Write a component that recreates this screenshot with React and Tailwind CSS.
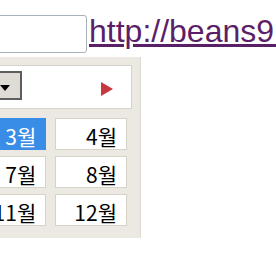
import React from "react";

const months = ["1월","2월","3월","4월","5월","6월","7월","8월","9월","10월","11월","12월"];

export default function App() {
  return (
    <div className="w-[276px] h-[260px] overflow-hidden bg-white font-['Liberation_Sans',sans-serif]">
      <div className="flex items-start pt-[15px]">
        <div className="w-[100px] -ml-[13px] h-[38px] shrink-0 border border-[#a9b1bb] rounded-[3px] bg-white" />
        <a href="#" className="ml-[2px] text-[32px] leading-[32px] text-[#5b1f68] underline whitespace-nowrap">
          http://beans9.tistory.com
        </a>
      </div>
      <div className="mt-[4px] -ml-[200px] w-[341px] h-[181px] bg-[#ebe9e1] border-r border-[#dcdad2] pt-[8px]">
        <div className="mx-[8px] h-[44px] border border-[#d6d3c9] bg-white flex items-start">
          <div className="ml-[143px] mt-[5px] w-[70px] h-[29px] border-2 border-[#5e5e5e] bg-white flex justify-end">
            <div className="w-[31px] h-full bg-[#dedcd5] border-l border-[#c9c6bd] flex items-center justify-center">
              <svg width="10" height="6" viewBox="0 0 10 6" className="mt-[5px]">
                <polygon points="0,0 10,0 5,6" fill="#000" />
              </svg>
            </div>
          </div>
          <svg width="12" height="14" viewBox="0 0 12 14" className="ml-auto mr-[18px] mt-[16px]">
            <polygon points="0,0 12,7 0,14" fill="#c8383f" />
          </svg>
        </div>
        <div className="mt-[9px] mx-[13px] grid grid-cols-4 gap-x-[9px] gap-y-[6px] font-['Noto_Sans_CJK_KR',sans-serif]">
          {months.map((m) => {
            const sel = m === "3월";
            return (
              <div
                key={m}
                className={
                  sel
                    ? "h-[32px] border border-[#3a8de6] bg-[#3a8de6] text-white text-right pr-[9px] text-[21px] leading-[35px]"
                    : "h-[32px] border border-[#d6d3c9] bg-white text-black text-right pr-[9px] text-[21px] leading-[35px]"
                }
              >
                {m}
              </div>
            );
          })}
        </div>
      </div>
    </div>
  );
}
